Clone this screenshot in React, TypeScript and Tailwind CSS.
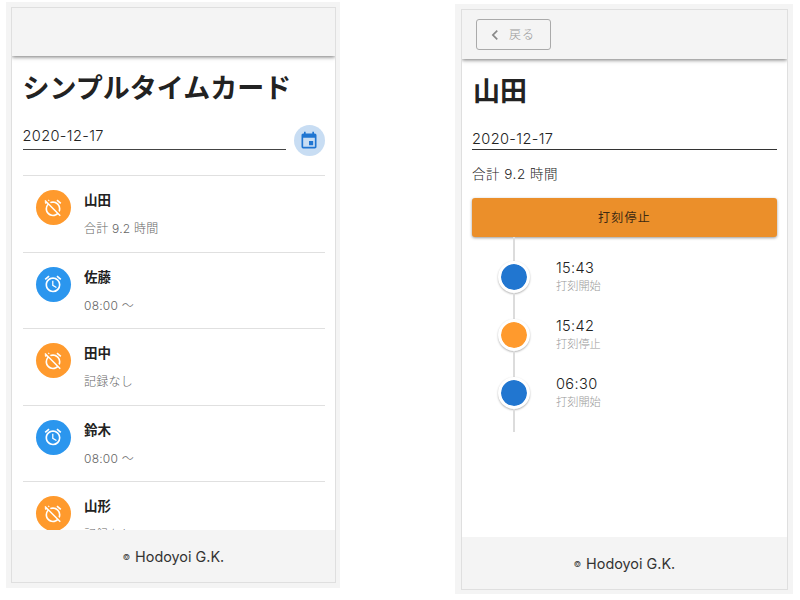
import type { ReactNode } from "react";
import { MdAlarm, MdAlarmOff, MdChevronLeft, MdEvent } from "react-icons/md";

type Member = { name: string; status: string; working: boolean };
type Stamp = { time: string; label: string; start: boolean };

const members: Member[] = [
  { name: "山田", status: "合計 9.2 時間", working: false },
  { name: "佐藤", status: "08:00 〜", working: true },
  { name: "田中", status: "記録なし", working: false },
  { name: "鈴木", status: "08:00 〜", working: true },
  { name: "山形", status: "記録なし", working: false },
];

const stamps: Stamp[] = [
  { time: "15:43", label: "打刻開始", start: true },
  { time: "15:42", label: "打刻停止", start: false },
  { time: "06:30", label: "打刻開始", start: true },
];

function Footer({ children }: { children: ReactNode }) {
  return (
    <footer className="flex h-[52px] shrink-0 items-center justify-center bg-[#f4f4f4] pt-[2px] text-[14.4px] text-[#333]">
      {children}
    </footer>
  );
}

function Copyright() {
  return (
    <p className="flex items-center whitespace-nowrap">
      <span className="mr-[5px] text-[8px]">©</span>
      <span>Hodoyoi G.K.</span>
    </p>
  );
}

function MemberRow({ member }: { member: Member }) {
  const Icon = member.working ? MdAlarm : MdAlarmOff;
  return (
    <li className="flex h-[76.6px] shrink-0 border-t border-[#e0e0e0] pl-[13px] pt-[14px]">
      <span
        className={`flex size-[35px] shrink-0 items-center justify-center rounded-full text-white ${
          member.working ? "bg-[#2b96ee]" : "bg-[#ff9a2d]"
        }`}
      >
        <Icon size={20} />
      </span>
      <div className="ml-[13.5px] whitespace-nowrap">
        <p className="h-5 text-[13.5px] font-bold leading-5 text-[#222]">{member.name}</p>
        <p className="mt-[9px] h-5 text-[12px] font-light leading-5 tracking-[0.22px] text-[#666]">
          {member.status}
        </p>
      </div>
    </li>
  );
}

function ListScreen() {
  return (
    <section className="h-[586px] w-[334px] bg-[#f4f4f4] py-[5px] pl-[5px] pr-[4px]">
      <div className="flex h-full flex-col overflow-hidden border border-[#dfdfdf] bg-white">
        <header className="relative h-[48px] shrink-0 bg-[#f4f4f4] shadow-[0_1px_4px_rgba(0,0,0,0.55)]" />
        <main className="flex min-h-0 flex-1 flex-col overflow-hidden pl-[10.5px] pr-[10.5px] pt-[13px]">
          <h1 className="h-10 shrink-0 whitespace-nowrap text-[27px] font-bold leading-10 text-[#222]">
            シンプルタイムカード
          </h1>
          <div className="mt-[16px] flex h-[31px] shrink-0">
            <p className="h-[25px] w-[263.5px] border-b border-[#444] text-[14.6px] font-light leading-[22px] tracking-[0.35px] text-[#222]">
              2020-12-17
            </p>
            <span className="ml-[7.5px] flex size-[31px] items-center justify-center rounded-full bg-[#c8ddf3] text-[#1f75d1]">
              <MdEvent size={20} />
            </span>
          </div>
          <ul className="mt-[19px] flex flex-col">
            {members.map((member) => (
              <MemberRow key={member.name} member={member} />
            ))}
          </ul>
        </main>
        <Footer>
          <Copyright />
        </Footer>
      </div>
    </section>
  );
}

function TimelineRow({ stamp }: { stamp: Stamp }) {
  return (
    <li className="flex h-[58px] shrink-0">
      <div className="flex w-[84px] flex-col items-center">
        <span className="h-[13px] w-[1.5px] bg-[#dcdcdc]" />
        <span
          className={`size-[32px] shrink-0 rounded-full border-[3px] border-white bg-clip-padding shadow-[0_1px_2px_rgba(0,0,0,0.3)] ${
            stamp.start ? "bg-[#2176d0]" : "bg-[#ff9a2d]"
          }`}
        />
        <span className="h-[13px] w-[1.5px] bg-[#dcdcdc]" />
      </div>
      <div className="whitespace-nowrap pt-[10px]">
        <p className="h-[19px] text-[14.6px] font-light leading-[20px] tracking-[0.35px] text-[#222]">
          {stamp.time}
        </p>
        <p className="h-[18px] text-[11.2px] font-light leading-[19px] text-[#999]">{stamp.label}</p>
      </div>
    </li>
  );
}

function DetailScreen() {
  return (
    <section className="h-[590px] w-[338px] bg-[#f4f4f4] pb-[4px] pl-[6px] pr-[5px] pt-[5px]">
      <div className="flex h-full flex-col overflow-hidden border border-[#dfdfdf] bg-white">
        <header className="relative h-[49px] shrink-0 bg-[#f4f4f4] pl-[14px] pt-[9px] shadow-[0_1px_4px_rgba(0,0,0,0.55)]">
          <button className="flex h-[31px] w-[75px] items-center rounded-[3px] border border-[#aaa] pl-[8px] text-[12px] font-light tracking-[1px] text-[#999]">
            <MdChevronLeft size={20} className="mr-[4px] text-[#888]" />
            戻る
          </button>
        </header>
        <main className="flex min-h-0 flex-1 flex-col px-[10px] pt-[13px]">
          <h2 className="h-10 shrink-0 pl-[1px] text-[27px] font-bold leading-10 text-[#222]">山田</h2>
          <p className="mt-[17px] h-[21px] shrink-0 border-b border-[#333] text-[14.6px] font-light leading-[20px] tracking-[0.35px] text-[#222]">
            2020-12-17
          </p>
          <p className="mt-[14px] h-5 shrink-0 text-[13.5px] font-light leading-5 tracking-[0.5px] text-[#222]">
            合計 9.2 時間
          </p>
          <button className="mt-[14px] h-[39px] shrink-0 rounded-[3px] bg-[#eb8f2a] text-[12px] tracking-[1.2px] text-[#3d2912] shadow-[0_1px_3px_rgba(0,0,0,0.4)]">
            打刻停止
          </button>
          <div className="flex flex-col">
            <div className="flex h-[11px] w-[84px] justify-center">
              <span className="w-[1.5px] bg-[#dcdcdc]" />
            </div>
            <ul className="flex flex-col">
              {stamps.map((stamp) => (
                <TimelineRow key={stamp.time} stamp={stamp} />
              ))}
            </ul>
            <div className="flex h-[10px] w-[84px] justify-center">
              <span className="w-[1.5px] bg-[#dcdcdc]" />
            </div>
          </div>
        </main>
        <Footer>
          <Copyright />
        </Footer>
      </div>
    </section>
  );
}

export default function App() {
  return (
    <div className="flex h-[600px] w-[800px] items-start overflow-hidden bg-white font-['Inter','Noto_Sans_CJK_JP',sans-serif]">
      <div className="pl-[6px] pt-[2px]">
        <ListScreen />
      </div>
      <div className="ml-[115px] pt-[4px]">
        <DetailScreen />
      </div>
    </div>
  );
}
